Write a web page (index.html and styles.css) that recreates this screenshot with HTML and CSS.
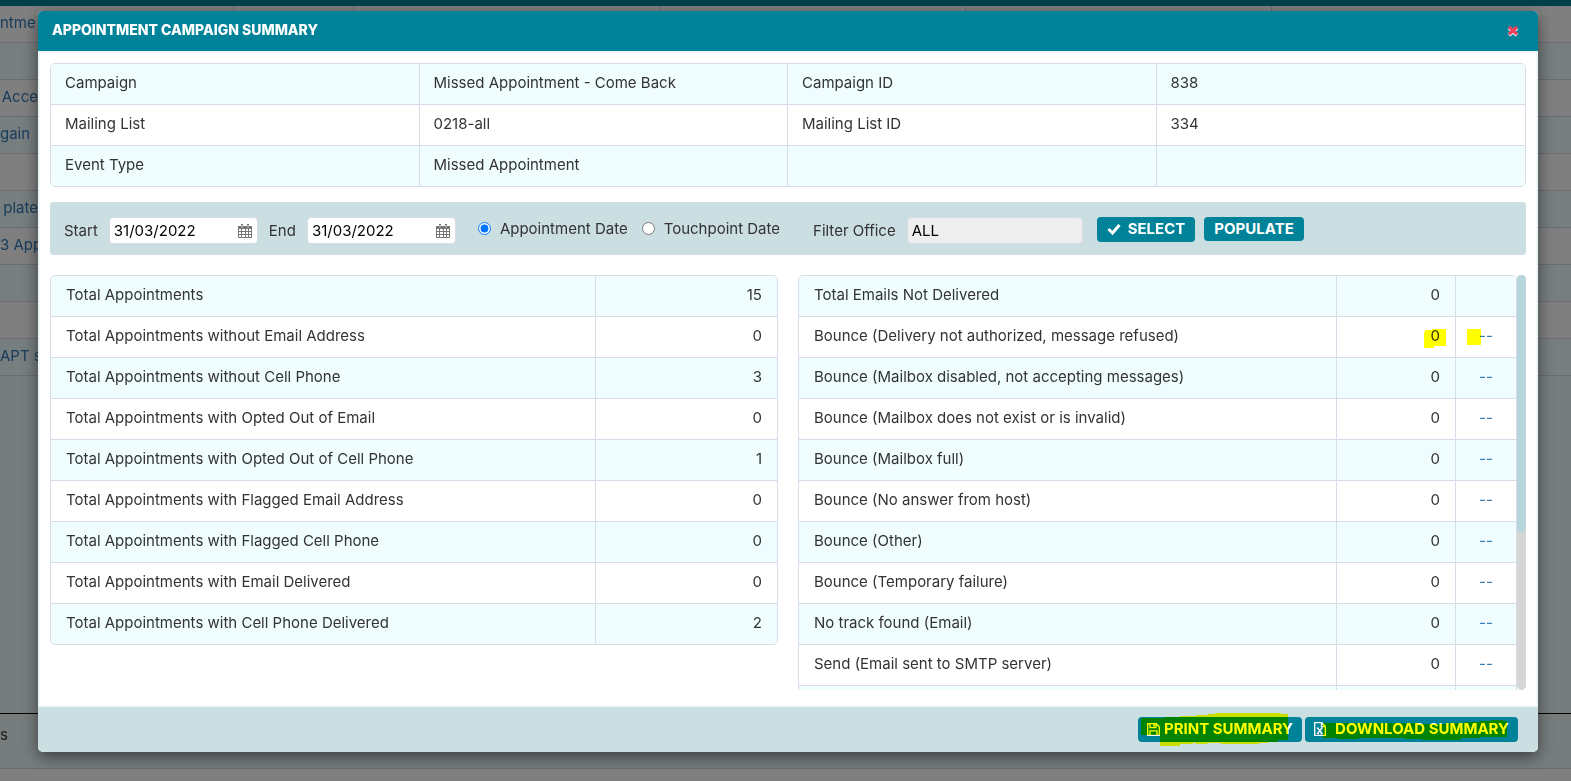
FILE: index.html
```html
<!DOCTYPE html>
<html lang="en">
<head>
  <meta charset="UTF-8" />
  <meta name="viewport" content="width=device-width, initial-scale=1.0"/>
  <title>Appointment Campaign Summary</title>
  <link rel="stylesheet" href="styles.css">
</head>
<body>

  <!-- Page behind the dialog -->
  <div class="page">
    <div class="top-bar"></div>
    <div class="list">
      <div class="list-row first"><span class="list-name">ntme</span><span></span><span></span><span></span><span></span><span></span></div>
      <div class="list-row"></div>
      <div class="list-row"><span class="list-name">Acce</span></div>
      <div class="list-row"><span class="list-name short">gain</span></div>
      <div class="list-row"></div>
      <div class="list-row"><span class="list-name">plate</span></div>
      <div class="list-row"><span class="list-name">3 App</span></div>
      <div class="list-row"></div>
      <div class="list-row"></div>
      <div class="list-row"><span class="list-name">APT s</span></div>
    </div>
    <div class="list-space"></div>
    <div class="page-footer">s</div>
  </div>
  <div class="overlay"></div>

  <!-- Dialog -->
  <div class="modal" role="dialog" aria-labelledby="modal-title">
    <div class="modal-header">
      <h2 id="modal-title">APPOINTMENT CAMPAIGN SUMMARY</h2>
      <button type="button" class="close-btn" aria-label="Close">
        <svg width="12" height="12" viewBox="0 0 12 12"><path d="M2 2.8l8 7.4M10 2.8l-8 7.4" stroke="#fff" stroke-width="3.8"/><path d="M2 2l8 7.4M10 2l-8 7.4" stroke="#ee3f5b" stroke-width="3.2"/></svg>
      </button>
    </div>

    <div class="modal-body">
      <table class="grid info">
        <tr><td>Campaign</td><td>Missed Appointment - Come Back</td><td>Campaign ID</td><td>838</td></tr>
        <tr><td>Mailing List</td><td>0218-all</td><td>Mailing List ID</td><td>334</td></tr>
        <tr><td>Event Type</td><td>Missed Appointment</td><td></td><td></td></tr>
      </table>

      <form class="filter-bar">
        <label for="start">Start</label>
        <div class="date-box">
          <input type="text" id="start" value="31/03/2022" />
          <svg width="14" height="14" viewBox="0 0 14 14"><path d="M0 2h14v12H0z" fill="#777"/><path d="M1 5h2v2H1zM4 5h3v2H4zM8 5h2v2H8zM11 5h2v2h-2zM1 8h2v2H1zM4 8h3v2H4zM8 8h2v2H8zM11 8h2v2h-2zM1 11h2v2H1zM4 11h3v2H4zM8 11h2v2H8zM11 11h2v2h-2z" fill="#fff"/><path d="M3 0h2v4H3zM9 0h2v4H9z" fill="#777"/><path d="M4 1v2.5M10 1v2.5" stroke="#ddd"/></svg>
        </div>
        <label for="end">End</label>
        <div class="date-box">
          <input type="text" id="end" value="31/03/2022" />
          <svg width="14" height="14" viewBox="0 0 14 14"><path d="M0 2h14v12H0z" fill="#777"/><path d="M1 5h2v2H1zM4 5h3v2H4zM8 5h2v2H8zM11 5h2v2h-2zM1 8h2v2H1zM4 8h3v2H4zM8 8h2v2H8zM11 8h2v2h-2zM1 11h2v2H1zM4 11h3v2H4zM8 11h2v2H8zM11 11h2v2h-2z" fill="#fff"/><path d="M3 0h2v4H3zM9 0h2v4H9z" fill="#777"/><path d="M4 1v2.5M10 1v2.5" stroke="#ddd"/></svg>
        </div>
        <div class="radios">
          <input type="radio" id="by-appointment" name="date-type" checked />
          <label for="by-appointment">Appointment Date</label>
          <input type="radio" id="by-touchpoint" name="date-type" />
          <label for="by-touchpoint">Touchpoint Date</label>
        </div>
        <label for="office">Filter Office</label>
        <input type="text" class="office" id="office" value="ALL" readonly />
        <div class="filter-buttons">
          <button type="button" class="btn select-btn">
            <svg width="14" height="12" viewBox="0 0 14 12"><path d="M1.5 6l4 4 7-8" fill="none" stroke="#fff" stroke-width="3"/></svg>
            SELECT
          </button>
          <button type="button" class="btn">POPULATE</button>
        </div>
      </form>

      <div class="columns">
        <table class="grid totals">
          <tr><td>Total Appointments</td><td>15</td></tr>
          <tr><td>Total Appointments without Email Address</td><td>0</td></tr>
          <tr><td>Total Appointments without Cell Phone</td><td>3</td></tr>
          <tr><td>Total Appointments with Opted Out of Email</td><td>0</td></tr>
          <tr><td>Total Appointments with Opted Out of Cell Phone</td><td>1</td></tr>
          <tr><td>Total Appointments with Flagged Email Address</td><td>0</td></tr>
          <tr><td>Total Appointments with Flagged Cell Phone</td><td>0</td></tr>
          <tr><td>Total Appointments with Email Delivered</td><td>0</td></tr>
          <tr><td>Total Appointments with Cell Phone Delivered</td><td>2</td></tr>
        </table>

        <div class="scroller">
          <div class="scroll-view">
            <table class="grid bounces">
              <tr><td>Total Emails Not Delivered</td><td>0</td><td></td></tr>
              <tr><td>Bounce (Delivery not authorized, message refused)</td><td><span class="marked">0<svg class="marker" width="22" height="19" viewBox="0 0 22 19"><path d="M3 1h5V0h14v17H10v2H0V3h1V1z" fill="#ff0"/></svg></span></td><td><span class="marked"><a href="#">--</a><svg class="marker side" width="14" height="16" viewBox="0 0 14 16"><path d="M0 0h14v16H0z" fill="#ff0"/></svg></span></td></tr>
              <tr><td>Bounce (Mailbox disabled, not accepting messages)</td><td>0</td><td><a href="#">--</a></td></tr>
              <tr><td>Bounce (Mailbox does not exist or is invalid)</td><td>0</td><td><a href="#">--</a></td></tr>
              <tr><td>Bounce (Mailbox full)</td><td>0</td><td><a href="#">--</a></td></tr>
              <tr><td>Bounce (No answer from host)</td><td>0</td><td><a href="#">--</a></td></tr>
              <tr><td>Bounce (Other)</td><td>0</td><td><a href="#">--</a></td></tr>
              <tr><td>Bounce (Temporary failure)</td><td>0</td><td><a href="#">--</a></td></tr>
              <tr><td>No track found (Email)</td><td>0</td><td><a href="#">--</a></td></tr>
              <tr><td>Send (Email sent to SMTP server)</td><td>0</td><td><a href="#">--</a></td></tr>
              <tr><td></td><td></td><td></td></tr>
            </table>
          </div>
          <div class="scroll-track"><div class="scroll-thumb"></div></div>
        </div>
      </div>
    </div>

    <div class="modal-footer">
      <button type="button" class="btn print-btn">
        <svg width="13" height="13" viewBox="0 0 13 13"><path d="M.7.7h8.6l3 3v8.6H.7zM3 .7v4h6v-4M3 12.3V7.8h7v4.5" fill="none" stroke="#fff" stroke-width="1.3"/><path d="M6.3 1h1.6v2.6H6.3z" fill="#fff"/></svg>
        PRINT SUMMARY
        <svg class="marker print-mark" width="147" height="33" viewBox="0 0 147 33"><path d="M0 5h24V4h15V3h16V2h12V1h7V0h66v1h7v26h-10v2h-10v1h-9v1H80v-1H66v1H55v-1H52v1H39v2H19V22H0z" fill="#ff0"/></svg>
      </button>
      <button type="button" class="btn download-btn">
        <svg width="12" height="14" viewBox="0 0 12 14"><path d="M.7.7h7l3.6 3.6v9H.7zM7.5.7v4h4" fill="none" stroke="#fff" stroke-width="1.3"/><path d="M3.5 6l4.5 5.5M8 6l-4.5 5.5M2.8 6h2M6.7 6h2M2.8 11.5h2M6.7 11.5h2" stroke="#fff" stroke-width="1.2"/></svg>
        DOWNLOAD SUMMARY
        <svg class="marker download-mark" width="184" height="21" viewBox="0 0 184 21"><path d="M0 3h95v1h28V3h19V2h15V1h11V0h12v1h4v16h-27v1h-19v2H99v-1H82v-1H35v1H15v-1H0z" fill="#ff0"/></svg>
      </button>
    </div>
  </div>

</body>
</html>
```

FILE: styles.css
```css
* {
  box-sizing: border-box;
}

body {
  margin: 0;
  min-height: 100vh;
  font-family: Inter, "Open Sans", sans-serif;
  font-size: 15px;
  line-height: 20px;
  color: #333;
  overflow: hidden;
}

/* Page behind the dialog */
.page {
  position: absolute;
  inset: 0;
  display: flex;
  flex-direction: column;
}

.top-bar {
  height: 6px;
  background: #008399;
}

.list-row {
  display: flex;
  height: 37px;
  padding-top: 7px;
  border-bottom: 1px solid #d8d8e2;
  color: #337ab7;
  white-space: nowrap;
}

.list-row:nth-child(even) {
  background: #effdff;
}

.list-name {
  width: 38px;
  text-align: right;
}

.list-name.short {
  text-align: left;
}

.first {
  padding-top: 0;
}

.first span {
  flex: 0 0 306px;
  padding-top: 7px;
  border-right: 1px solid #d8d8e2;
  text-align: left;
}

.first span:nth-child(1) {
  flex-basis: 234px;
}

.first span:nth-child(2) {
  flex-basis: 120px;
}

.list-space {
  flex: 1;
  background: #effafb;
}

.page-footer {
  height: 56px;
  margin-bottom: 12px;
  padding-top: 11px;
  border-top: 1px solid #000;
  border-bottom: 1px solid #d8d8e2;
  background: #effafb;
}

.overlay {
  position: absolute;
  inset: 0;
  background: rgba(0, 0, 0, 0.5);
}

/* Dialog */
.modal {
  position: relative;
  margin: 11px 33px 0 38px;
  border-radius: 5px;
  background: #fff;
  box-shadow: 0 5px 15px rgba(0, 0, 0, 0.5);
}

.modal-header {
  display: flex;
  justify-content: space-between;
  align-items: center;
  height: 40px;
  padding: 0 19px 2px 14px;
  border-radius: 5px 5px 0 0;
  background: #008399;
}

.modal-header h2 {
  margin: 0;
  font-size: 14px;
  font-weight: 800;
  color: #fff;
}

.close-btn {
  display: flex;
  padding: 2px 0 0;
  border: none;
  background: none;
  cursor: pointer;
}

.modal-body {
  padding: 10px 10px 15px;
  border: 2px solid #eef6f9;
}

/* Tables */
.grid {
  width: 100%;
  table-layout: fixed;
  border-spacing: 0;
  border: 1px solid #d8dbe8;
  border-radius: 5px;
  overflow: hidden;
}

.grid td {
  height: 41px;
  padding: 0 15px 2px;
  border-right: 1px solid #d8dbe8;
  border-bottom: 1px solid #d8dbe8;
  white-space: nowrap;
}

.grid td:last-child {
  border-right: none;
}

.grid tr:last-child td {
  height: 40px;
  border-bottom: none;
}

.grid tr:nth-child(odd) {
  background: #effdff;
}

.grid a {
  color: #337ab7;
  text-decoration: none;
}

.info td {
  padding: 0 14px 2px;
}

/* Filters */
.filter-bar {
  display: flex;
  align-items: center;
  height: 53px;
  margin: 15px 0 20px;
  padding: 4px 14px 0;
  border-radius: 4px;
  background: #cbdee2;
}

.date-box {
  display: flex;
  align-items: center;
  width: 149px;
  height: 27px;
  margin: 0 11px;
  padding-right: 5px;
  border: 1px solid #d8dbe8;
  border-radius: 4px;
  background: #fff;
}

.filter-bar input[type="text"] {
  min-width: 0;
  padding: 0 4px;
  border: none;
  outline: none;
  font: inherit;
  color: #000;
  background: none;
}

.date-box input {
  flex: 1;
}

.radios {
  display: flex;
  align-items: center;
  margin: 0 33px 4px 11px;
}

.radios input {
  width: 13px;
  height: 13px;
  margin: 0 9px 0 0;
}

.radios label {
  margin-right: 14px;
}

.radios label:last-child {
  margin-right: 0;
}

.filter-bar input.office {
  width: 176px;
  height: 27px;
  margin-left: 11px;
  border: 1px solid #d8dbe8;
  border-radius: 4px;
  background: #eee;
}

.filter-buttons {
  display: flex;
  align-items: flex-start;
  gap: 9px;
  margin: 0 0 2px 14px;
}

.btn {
  display: flex;
  align-items: center;
  position: relative;
  height: 24px;
  padding: 0 10px 1px;
  border: none;
  border-radius: 4px;
  background: #008399;
  font: bold 15px/20px Inter, "Open Sans", sans-serif;
  color: #fff;
  white-space: nowrap;
  cursor: pointer;
}

.select-btn {
  height: 25px;
  gap: 7px;
}

/* Result columns */
.columns {
  display: flex;
  align-items: flex-start;
  gap: 20px;
}

.totals {
  flex: 0 1 728px;
}

.totals td:last-child {
  width: 25%;
  text-align: right;
}

.scroller {
  flex: 1;
  display: flex;
  height: 415px;
}

.scroll-view {
  flex: 1;
  overflow: hidden;
}

.bounces td:nth-child(2) {
  width: 119px;
  text-align: right;
}

.bounces td:nth-child(3) {
  width: 60px;
  text-align: center;
}

.scroll-track {
  width: 9px;
  border-radius: 5px;
  background: #d6d6d6;
}

.scroll-thumb {
  height: 62%;
  border-radius: 5px;
  background: #b5d6dd;
}

/* Highlighter strokes */
.marked {
  position: relative;
}

.marker {
  position: absolute;
  top: 3px;
  right: -6px;
  mix-blend-mode: multiply;
  pointer-events: none;
}

.side {
  right: 12px;
}

.modal-footer {
  display: flex;
  justify-content: flex-end;
  align-items: center;
  gap: 3px;
  height: 45px;
  padding-right: 20px;
  border-radius: 0 0 5px 5px;
  background: #cbdee2;
}

.modal-footer .btn {
  height: 25px;
  padding: 0 9px 1px;
}

.print-btn {
  gap: 4px;
}

.download-btn {
  gap: 9px;
}

.print-mark {
  top: -4px;
  left: 3px;
}

.download-mark {
  top: 3px;
  left: 18px;
}
```
